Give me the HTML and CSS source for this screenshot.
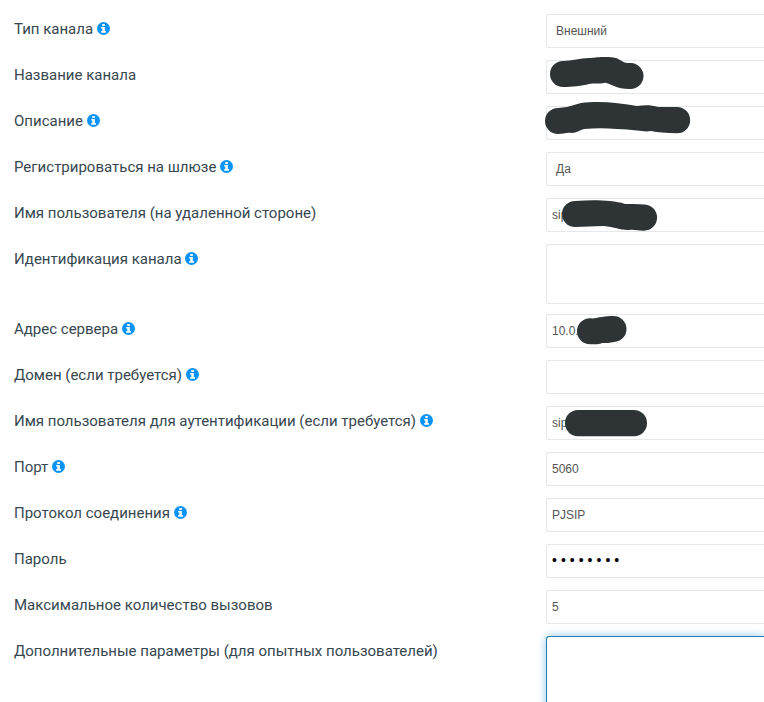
FILE: index.html
```
<!DOCTYPE html>
<html lang="ru">

<head>
  <meta charset="utf-8">
  <title>Настройки канала</title>
  <link rel="stylesheet" href="styles.css">
</head>

<body>
  <svg class="sprite">
    <symbol id="info" viewBox="0 0 13 13">
      <circle cx="6.500" cy="6.500" r="6.500"/>
      <path fill="#fff" d="M5.300 2h2.500v2H5.300zM4.200 4.900h3.600v4.200h1.100v1.700H4.200V9.100h1.100V6.600H4.200z"/>
    </symbol>
  </svg>

  <form class="form">
    <div class="row">
      <label class="label">Тип канала <svg class="info"><use href="#info"/></svg></label>
      <div class="field select">Внешний</div>
    </div>
    <div class="row">
      <label class="label">Название канала</label>
      <div class="field">
        <svg class="mask" viewBox="0 0 218 34"><path d="M17 1C26 1 34-2 43-2C48-2 51-3 57-3C63-3 66-3 70-2C75 0 78 3 81 3L85 3A13 13 0 0 1 84 29C77 29 72 28 68 26C64 25 61 22 58 23C53 24 48 23 43 24C36 26 26 27 17 27A13 13 0 0 1 17 1z"/></svg>
      </div>
    </div>
    <div class="row">
      <label class="label">Описание <svg class="info"><use href="#info"/></svg></label>
      <div class="field">
        <svg class="mask" viewBox="0 0 218 34"><path d="M12 2C15 2 18 1 21 1C26 0 30-2 35-3C40-4 46-4 51-4C65-4 79-2 91 0C98-1 106-1 112 1C119 1 125 1 131 1A13 13 0 0 1 131 27.300C126 27 121 27 116 26.500C112 26 109 26 105 25C100 26 96 25 91 24.500C84 24 78 23 71 23C60 22 49 22 38 23C34 24 30 27 26 27C21 26 17 28 12 28A13 13 0 0 1 12 2z"/></svg>
      </div>
    </div>
    <div class="row">
      <label class="label">Регистрироваться на шлюзе <svg class="info"><use href="#info"/></svg></label>
      <div class="field select">Да</div>
    </div>
    <div class="row">
      <label class="label">Имя пользователя (на удаленной стороне)</label>
      <div class="field">sip
        <svg class="mask" viewBox="0 0 218 34"><path d="M29 3C42 2 54 2 64 3C70 4 74 4 79 6C85 6 92 6 98 6.500A13 13 0 0 1 98 32.700C93 33 88 31 83 32C77 32 74 31 69 30C65 29 61 28 57 28C48 28 38 29 29 29A13 13 0 0 1 29 3z"/></svg>
      </div>
    </div>
    <div class="row row-area">
      <label class="label">Идентификация канала <svg class="info"><use href="#info"/></svg></label>
      <div class="field area"></div>
    </div>
    <div class="row">
      <label class="label">Адрес сервера <svg class="info"><use href="#info"/></svg></label>
      <div class="field">10.0.
        <svg class="mask" viewBox="0 0 218 34"><path d="M44 4.300C49 5 52 3 56 3C60 2 63 2 67 2A13 13 0 0 1 68 28C64 29 60 29 56 29C52 31 48 30 44 30.300A13 13 0 0 1 44 4.300z"/></svg>
      </div>
    </div>
    <div class="row">
      <label class="label">Домен (если требуется) <svg class="info"><use href="#info"/></svg></label>
      <div class="field"></div>
    </div>
    <div class="row">
      <label class="label">Имя пользователя для аутентификации (если требуется) <svg class="info"><use href="#info"/></svg></label>
      <div class="field">sip
        <svg class="mask" viewBox="0 0 218 34"><rect x="19" y="4" width="82" height="26.300" rx="13"/></svg>
      </div>
    </div>
    <div class="row">
      <label class="label">Порт <svg class="info"><use href="#info"/></svg></label>
      <div class="field">5060</div>
    </div>
    <div class="row">
      <label class="label">Протокол соединения <svg class="info"><use href="#info"/></svg></label>
      <div class="field">PJSIP</div>
    </div>
    <div class="row">
      <label class="label">Пароль</label>
      <div class="field password">••••••••</div>
    </div>
    <div class="row">
      <label class="label">Максимальное количество вызовов</label>
      <div class="field">5</div>
    </div>
    <div class="row">
      <label class="label">Дополнительные параметры (для опытных пользователей)</label>
      <div class="field params focused"></div>
    </div>
  </form>
</body>

</html>
```
FILE: styles.css
```
* {
  box-sizing: border-box;
}

body {
  margin: 0;
  height: 702px;
  overflow: hidden;
  background: #fff;
  font-family: Roboto, sans-serif;
}

.sprite {
  display: none;
}

.form {
  display: flex;
  flex-direction: column;
  gap: 12px;
  padding: 14px 0 0 14px;
}

.row {
  display: grid;
  grid-template-columns: 532px 218px;
  align-items: start;
}

.row-area {
  margin-bottom: -2px;
}

.label {
  padding-top: 5px;
  font-size: 15px;
  line-height: 20px;
  color: #37474f;
  white-space: nowrap;
}

.info {
  width: 13px;
  height: 13px;
  vertical-align: -1px;
  fill: #0a93fa;
}

.field {
  position: relative;
  height: 34px;
  padding-left: 5px;
  border: 1px solid #e4e8ea;
  border-right: 0;
  border-radius: 3px 0 0 3px;
  font: 12px/32px "Liberation Sans", Arial, sans-serif;
  color: #555;
}

.select {
  padding-left: 9px;
}

.area {
  height: 60px;
}

.password {
  font-size: 14px;
  line-height: 30px;
  letter-spacing: 4px;
  color: #000;
}

.params {
  height: 90px;
}

.focused {
  border-color: #2980b0;
  box-shadow: 0 0 8px rgba(60, 160, 220, .6);
}

/* marker strokes over private values */
.mask {
  position: absolute;
  top: -1px;
  left: -1px;
  width: 218px;
  height: 34px;
  overflow: visible;
  fill: #2e3436;
}
```
